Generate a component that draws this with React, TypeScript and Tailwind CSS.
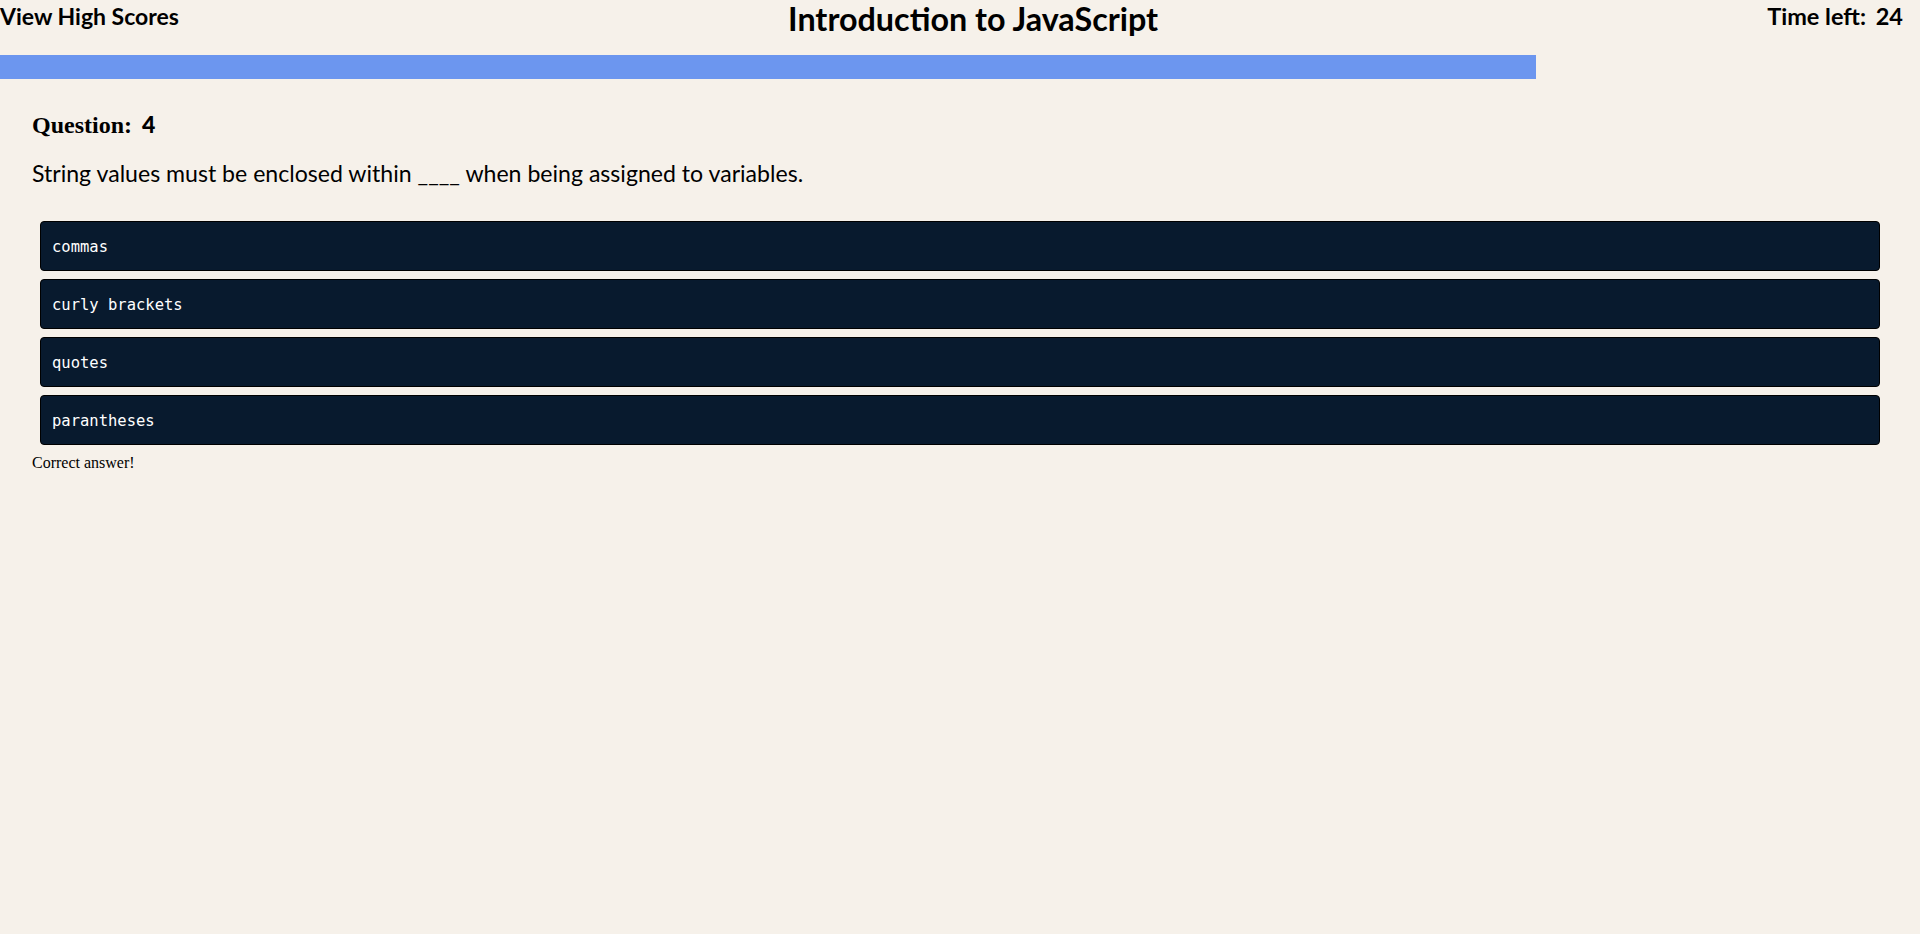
import React from 'react';

const answers = ['commas', 'curly brackets', 'quotes', 'parantheses'];

export default function App() {
    return (
        <div className="min-h-[934px] w-full bg-[#f6f1ea] text-black">
            <header className="flex h-[55px] items-start justify-between pr-[17px] font-['Lato',sans-serif] font-bold">
                <a className="pt-[2px] text-[23px] leading-[28px]">View High Scores</a>
                <h1 className="text-[32.3px] leading-[38px]">Introduction to JavaScript</h1>
                <div className="pt-[2px] text-[23.5px] leading-[28px]">
                    Time left: <span className="ml-[4px]">24</span>
                </div>
            </header>

            <div className="h-6 w-[80%] bg-[#6c96ef]" />

            <main className="px-8 pt-[30px]">
                <h2 className="flex items-baseline gap-[10px] text-[24px] leading-[30px]">
                    <span className="font-['Liberation_Serif',serif] font-bold">Question:</span>
                    <span className="font-['Lato',sans-serif] text-[23px] font-black">4</span>
                </h2>
                <p className="mt-[18px] font-['Lato',sans-serif] text-[23.1px] leading-[30px]">
                    String values must be enclosed within ____ when being assigned to variables.
                </p>

                <ul className="mt-[33px] flex flex-col gap-2 px-2">
                    {answers.map((answer, index) => (
                        <li key={index}>
                            <button className="flex h-[50px] w-full items-center rounded border border-black bg-[#081a2e] px-[11px] pt-[3px] text-left font-['DejaVu_Sans_Mono',monospace] text-[15.5px] font-medium text-white">
                                {answer}
                            </button>
                        </li>
                    ))}
                </ul>

                <p className="mt-[8px] font-['Liberation_Serif',serif] text-[16px] leading-[20px]">Correct answer!</p>
            </main>
        </div>
    );
}
